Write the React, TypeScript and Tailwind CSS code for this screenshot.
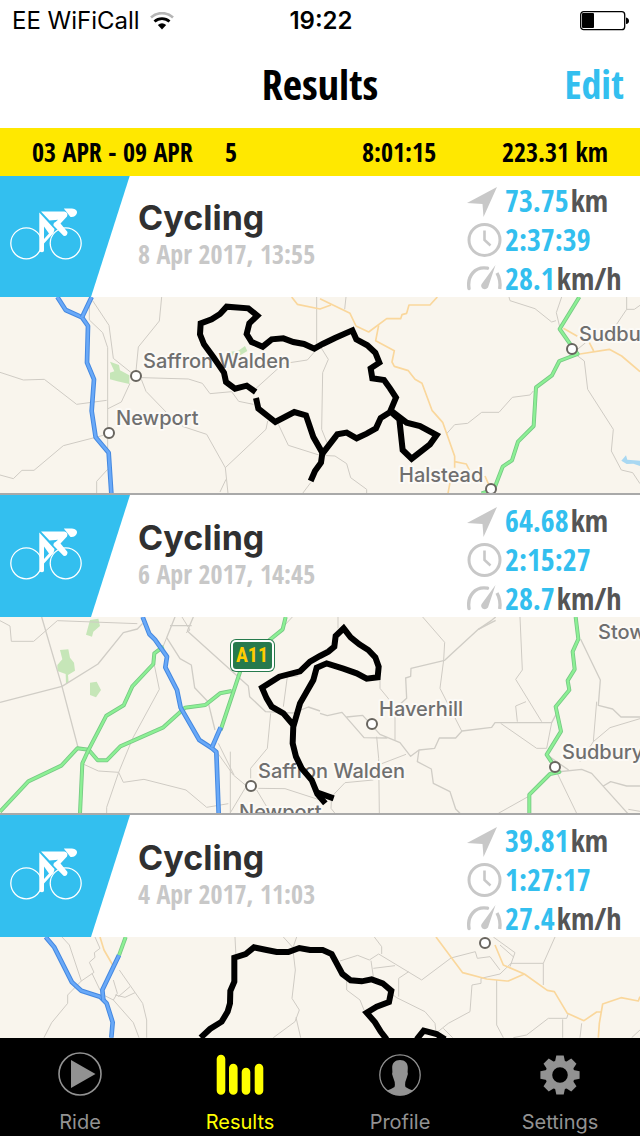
import React from "react";

type Point = { x: number; y: number };

interface Place extends Point {
  name?: string;
  label?: Point;
}

interface Road {
  kind: "minor" | "lane" | "local" | "primary" | "motorway";
  d: string;
}

interface RideMap {
  originY: number;
  parks: string[];
  water?: string[];
  roads: Road[];
  places: Place[];
  track: string[];
  shield?: { name: string; x: number; y: number };
}

interface Ride {
  id: number;
  sport: string;
  date: string;
  distance: string;
  duration: string;
  speed: string;
  map: RideMap;
}

const condensed = "font-['Open_Sans_Condensed','Roboto_Condensed',sans-serif] font-bold";

// Road geometry is stored at three units per pixel
const rides: Ride[] = [
  {
    id: 1,
    sport: "Cycling",
    date: "8 Apr 2017, 13:55",
    distance: "73.75",
    duration: "2:37:39",
    speed: "28.1",
    map: {
      originY: 3,
      parks: [
        "M330 197L357 207L360 223L388 238V264L352 256L330 250V230L343 226Z",
        "M686 168L715 164L735 150L742 165L722 177L708 176L690 182Z",
      ],
      water: ["M1864 494L1878 478L1882 491L1920 494V510L1900 503L1880 504Z"],
      roads: [
        { kind: "minor", d: "M0 229L70 252L133 250L230 325L320 313" },
        { kind: "minor", d: "M0 537L40 548L66 523H102L190 449L310 418" },
        { kind: "minor", d: "M268 10V72L308 110L323 155V470M323 520L290 556V592" },
        { kind: "minor", d: "M278 14L327 88L340 187L396 232" },
        { kind: "minor", d: "M485 3L478 75L415 153L408 225" },
        { kind: "minor", d: "M426 245L565 249L607 262L630 293L695 287L716 316L760 325" },
        { kind: "minor", d: "M424 250L438 286L500 350L550 392L620 415L676 515L684 592M390 262L364 318L324 338" },
        { kind: "minor", d: "M660 588L678 550M676 515L798 400L803 375M765 280L850 203L922 192L950 160V3" },
        { kind: "minor", d: "M835 385L865 448L960 478L1005 480L1040 503L1052 545L1100 580V592M932 560L908 592" },
        { kind: "minor", d: "M960 150L985 190L968 230L965 400L985 450" },
        { kind: "minor", d: "M1038 3L1034 40" },
        { kind: "minor", d: "M1527 3L1530 14L1605 38L1655 78L1668 74M1685 3L1669 50L1680 96" },
        { kind: "minor", d: "M1880 3V40L1849 86M1880 40H1903L1920 28" },
        { kind: "minor", d: "M1600 285L1590 297L1537 304L1497 349H1445L1403 382L1364 386L1340 413" },
        { kind: "minor", d: "M1757 140L1720 170L1753 195L1763 280L1840 400L1834 465L1864 522L1898 530L1920 563" },
        { kind: "local", d: "M875 3L892 25L960 39L993 27M960 8L1050 52L1068 90L1106 108L1160 68H1202L1206 56L1220 52L1227 27H1290L1312 3" },
        { kind: "local", d: "M1136 88L1127 134L1183 164L1176 198L1183 211L1225 224L1245 250L1266 262L1296 343L1328 379L1364 481V515M1364 497L1399 504L1408 522M1350 560L1344 592M1455 540L1470 575" },
        { kind: "local", d: "M1690 97L1732 121M1740 174L1828 160L1865 180L1920 227M1768 140L1781 165" },
        { kind: "primary", d: "M1738 3L1679 99L1716 152L1733 174L1678 195L1656 238L1608 274L1601 390L1554 437L1536 493L1508 512L1482 580L1445 592" },
        { kind: "motorway", d: "M172 3L197 42L246 64L264 90L261 200L282 250L275 345L287 424L326 470L334 592" },
        { kind: "motorway", d: "M275 3L246 64" },
      ],
      places: [
        { x: 136, y: 79, name: "Saffron Walden", label: { x: 143, y: 71 } },
        { x: 109, y: 136, name: "Newport", label: { x: 116, y: 128 } },
        { x: 572, y: 52, name: "Sudbury", label: { x: 579, y: 44 } },
        { x: 491, y: 192, name: "Halstead", label: { x: 399, y: 185 } },
      ],
      track: [
        "M767 288L740 269L705 278L678 258L672 230L640 183L612 145L600 115L602 82L635 70L660 54L680 32L745 37L772 59L748 82L740 114L755 138L788 152L815 130L850 127L880 138L912 144L943 158L968 144L1005 126L1057 103L1069 130L1102 148L1126 170L1138 200L1112 217L1117 247L1152 252L1170 277L1188 305L1172 343L1220 380L1260 390L1310 417L1290 445L1235 488L1208 462L1198 370L1172 347L1142 366L1128 397L1100 413L1070 427L1040 410L1012 415L968 472L940 423L918 358L883 348L826 378L775 338L768 306",
        "M968 465L963 500L945 525L932 555",
      ],
    },
  },
  {
    id: 2,
    sport: "Cycling",
    date: "6 Apr 2017, 14:45",
    distance: "64.68",
    duration: "2:15:27",
    speed: "28.7",
    map: {
      originY: 21,
      parks: [
        "M180 120L205 118L210 143L222 158L225 182L204 195L206 218L198 222L197 192L172 183L172 165L187 148Z",
        "M270 30L295 26L300 48L280 65L276 80L258 74Z",
        "M270 218L290 215L303 240L288 262L270 255Z",
      ],
      roads: [
        { kind: "minor", d: "M0 32L30 48L34 94H101L172 32L412 41" },
        { kind: "lane", d: "M0 277L186 229L294 162L370 68L412 57L428 40M125 21L186 229L234 412" },
        { kind: "lane", d: "M562 63L580 21M510 47H575M525 21L500 83L540 146L574 165L584 233L624 275L645 360M562 63L745 228L749 260L797 305L880 309L925 291L960 303" },
        { kind: "minor", d: "M462 160L478 238L398 385L356 487L320 592V610M245 460L295 483L356 487L370 517L432 508L558 540L620 592L685 581" },
        { kind: "minor", d: "M546 21L570 60L558 68M877 21L850 50M500 83L485 120M650 425L700 495L748 535M655 400L702 495M691 425V610" },
        { kind: "minor", d: "M752 505V475L802 415L812 310M850 290L862 200L895 198M775 535L855 536L960 570M770 540L800 590M735 535L690 610" },
        { kind: "minor", d: "M1014 21V55M1140 205V235L1185 290V390M1268 21L1334 97L1331 150L1320 235L1385 363" },
        { kind: "lane", d: "M1487 31L1435 58L1334 151L1233 175L1232 199L1217 204L1220 265L1190 292" },
        { kind: "lane", d: "M1487 21L1475 31L1435 58" },
        { kind: "lane", d: "M960 310L982 317L1026 307L1092 383L1162 384M1040 321L1088 316L1140 373L1200 398L1232 439L1257 420L1304 415L1318 384H1367L1386 363L1475 352L1485 338H1655L1670 310" },
        { kind: "lane", d: "M1257 420L1252 455L1294 477L1300 520L1350 545L1367 597L1380 610" },
        { kind: "minor", d: "M1130 380L1136 445L1138 610M1218 433L1140 463L1120 510L1035 518L995 560L993 595L1005 610" },
        { kind: "minor", d: "M1560 21L1567 180L1547 208L1625 335M1578 275L1547 288L1552 335M1502 340L1610 415H1640L1655 338" },
        { kind: "lane", d: "M1742 88L1801 210L1795 286L1838 297L1863 321H1920M1648 440L1706 480M1670 486L1745 478L1775 490L1883 610M1810 528L1832 515L1880 528H1920" },
        { kind: "minor", d: "M1790 275L1780 395L1830 353L1920 326M1780 395L1740 455M1670 486L1730 610M1588 558L1495 610M1885 598L1920 604" },
        { kind: "primary", d: "M0 605L85 514L184 467L232 415L266 419L293 451H320L361 409L490 352L555 293L616 285L660 250L695 243" },
        { kind: "primary", d: "M240 610L247 460L266 419L319 317L371 286L397 229L460 162L463 130L490 110" },
        { kind: "primary", d: "M857 21L848 58L790 105L722 180L662 360" },
        { kind: "primary", d: "M1727 21L1735 87L1718 125L1724 178L1703 212L1708 240L1667 290L1683 364L1640 434L1664 470L1678 486L1650 492L1588 554V610" },
        { kind: "motorway", d: "M428 21L448 72L465 89L501 140L496 172L531 240L542 293L598 390L635 414L649 426L656 610" },
        { kind: "motorway", d: "M662 352L636 412" },
      ],
      places: [
        { x: 251, y: 169, name: "Saffron Walden", label: { x: 258, y: 161 } },
        { x: 372, y: 107, name: "Haverhill", label: { x: 379, y: 99 } },
        { x: 555, y: 150, name: "Sudbury", label: { x: 562, y: 142 } },
        { x: 700, y: 12, name: "Stow", label: { x: 598, y: 22 } },
        { x: 230, y: 222, name: "Newport", label: { x: 239, y: 202 } },
      ],
      track: [
        "M976 580L952 552L935 510L905 475L888 440L878 400L880 345L850 310L815 290L800 265L786 233L838 200L900 184L930 155L960 138L985 125L1003 110L1007 78L1031 55L1052 82L1078 103L1105 120L1126 142L1136 170L1133 202L1100 206L1070 190L1030 176L980 160L950 173L940 210L900 280L880 350",
        "M950 547L1001 565",
      ],
      shield: { name: "A11", x: 230, y: 22 },
    },
  },
  {
    id: 3,
    sport: "Cycling",
    date: "4 Apr 2017, 11:03",
    distance: "39.81",
    duration: "1:27:17",
    speed: "27.4",
    map: {
      originY: 21,
      parks: [],
      roads: [
        { kind: "minor", d: "M186 21L208 45L244 153L282 127L268 97L285 82L283 68L300 55L285 21M244 153L203 195V220L155 278L132 323M276 130L300 180" },
        { kind: "minor", d: "M358 120L428 220L440 270V323M310 195L340 210L400 278L417 323M340 150L352 190L340 210M345 195L375 202L405 188M390 170L355 200" },
        { kind: "minor", d: "M705 21L708 80M850 21L878 52L886 120L876 205L898 240L885 275L820 323M888 262L902 323M890 21L880 50" },
        { kind: "minor", d: "M1020 93L1073 76L1108 90L1136 72L1265 150L1353 84L1426 65L1432 85L1470 80L1500 120M1113 92L1120 140M1120 115L1185 107M1123 21L1145 50V72" },
        { kind: "minor", d: "M1040 150V180L1080 210L1092 240M1160 180L1190 203L1275 245L1305 280L1308 305M1226 125L1196 145V200" },
        { kind: "minor", d: "M1314 305L1345 280L1410 245L1416 165L1443 160V145L1500 132L1533 100H1630V165M1630 100L1665 21M1480 21L1545 68L1530 110M1500 45L1542 82" },
        { kind: "minor", d: "M1490 150V285L1510 323M1540 323L1580 315L1645 265H1700L1705 250M1688 268V323M1745 280L1740 323M1330 295L1358 323M1895 323L1920 300" },
        { kind: "local", d: "M300 21L312 60L338 105M1308 21L1388 128L1460 147L1520 153L1525 153L1573 132M1485 45L1510 105L1573 132L1642 181L1663 185L1702 250L1752 272L1790 246H1804M1795 323L1798 280L1808 222L1863 203L1915 213L1920 200" },
        { kind: "primary", d: "M377 21L357 76" },
        { kind: "motorway", d: "M137 21L163 52L216 157L244 182L300 200L320 220L338 277L334 323" },
        { kind: "motorway", d: "M357 76L307 180L310 210" },
      ],
      places: [{ x: 485, y: 6 }],
      track: [
        "M602 323L630 297L665 275L683 245L690 220L691 183L703 155V83L737 72L762 52L800 60L830 66H865L898 54L930 60H968L995 72L1010 100L1027 132L1052 151L1085 154L1115 148L1148 160L1174 182L1167 216L1130 230L1100 248L1125 277L1142 305L1160 328",
        "M1250 328L1271 302L1310 312L1335 328",
      ],
    },
  },
];

const roadCasing = {
  minor: "stroke-[#cfcbc4]",
  lane: "stroke-[#d0cdc6]",
  local: "stroke-[#fad79c]",
  primary: "stroke-[#77c884]",
  motorway: "stroke-[#4488e0]",
};

const roadWidth = { minor: 3, lane: 4, local: 5, primary: 12, motorway: 14 };

const WifiIcon = () => (
  <svg viewBox="0 0 24 18" className="w-6 h-[18px]" fill="none" aria-hidden="true">
    <path d="M1 5.500A16 16 0 0 1 23 5.500" stroke="#b5b5b5" strokeWidth="2.600" />
    <path d="M4.500 9.500A11 11 0 0 1 19.500 9.500" stroke="#000" strokeWidth="2.800" />
    <path d="M7.800 13A6.500 6.500 0 0 1 16.200 13L12 17.500Z" fill="#000" />
  </svg>
);

const BatteryIcon = () => (
  <svg viewBox="0 0 50 20" className="w-[50px] h-5" aria-hidden="true">
    <rect x="0.700" y="0.700" width="44" height="18" rx="3" fill="none" stroke="#000" strokeWidth="1.300" />
    <rect x="2" y="2" width="12" height="15" rx="1" fill="#000" />
    <path d="M46 6.500Q49 7 49 10Q49 12.500 46 13Z" fill="#000" />
  </svg>
);

const CyclistIcon = () => (
  <svg viewBox="0 0 72 52" className="w-[72px] h-[52px]" fill="none" aria-hidden="true">
    <g stroke="#fff" strokeWidth="1.300">
      <circle cx="16.300" cy="35.300" r="15.500" />
      <circle cx="55.700" cy="35.300" r="15.500" />
    </g>
    <path
      fill="#fff"
      d="M29.300 4.500L43 19.500L44.500 21L43.500 25L34 35.500V42.500Q34 44.200 32 44.200Q29.300 44.200 29.300 42.500ZM34 18.500V31L39 25.500Z"
      fillRule="evenodd"
    />
    <path
      fill="#fff"
      d="M31 3.500H54.500Q58.500 4.500 57 8.500L50.500 15.500L57.500 24Q57.500 28.500 53.500 27.800L43.500 17.500Q43 15 45.500 14L48 11.800L39.500 12.500Z"
    />
    <path fill="#fff" d="M53.800 0.500H62Q67.500 1 67 5Q65.500 9.500 60.500 9Z" />
  </svg>
);

const DistanceIcon = () => (
  <svg viewBox="0 0 36 36" className="w-9 h-9" fill="#c8c8c8" aria-hidden="true">
    <path d="M30 4L16.500 34L15.500 21L0 20Z" />
  </svg>
);

const ClockIcon = () => (
  <svg viewBox="0 0 36 36" className="w-9 h-9" fill="none" stroke="#c8c8c8" aria-hidden="true">
    <circle cx="17.500" cy="18" r="15.500" strokeWidth="3" />
    <path d="M17.500 8.500V18L23.500 23.500" strokeWidth="2.600" />
  </svg>
);

const SpeedIcon = () => (
  <svg viewBox="0 0 36 36" className="w-9 h-9" aria-hidden="true">
    <g fill="none" stroke="#c8c8c8" strokeWidth="3.400">
      <path d="M2 27.500C0 15 8 5 20.500 7.200" strokeLinecap="round" />
      <path d="M30 12Q34 19 32.700 28" />
    </g>
    <path d="M28.500 4L21 26.500Q18.500 29.500 15.500 27.500Q13 25 15 22.500Z" fill="#c8c8c8" />
  </svg>
);

const PlayIcon = () => (
  <svg viewBox="0 0 44 44" className="w-11 h-11" aria-hidden="true">
    <circle cx="22" cy="22" r="21" fill="none" stroke="currentColor" strokeWidth="1.600" />
    <path d="M13 8V36L37.500 22Z" fill="currentColor" />
  </svg>
);

const BarsIcon = () => (
  <svg viewBox="0 0 48 44" className="w-12 h-11" stroke="currentColor" strokeWidth="8.600" strokeLinecap="round" aria-hidden="true">
    <path d="M5 7V38.500M17.300 16V38.500M30 20V38.500M43 16V38.500" />
  </svg>
);

const ProfileIcon = () => (
  <svg viewBox="0 0 44 44" className="w-11 h-11" aria-hidden="true">
    <circle cx="22" cy="23" r="20.200" fill="none" stroke="currentColor" strokeWidth="1.300" />
    <path
      fill="currentColor"
      d="M22 8C27 8 30 11 29.800 16L29.600 20Q30.500 21.500 29 25L27.300 30Q26.800 33 27.500 35Q31 37 34.800 38.500Q29.500 43.400 22 43.400T9.200 38.500Q13 37 16.500 35Q17.200 33 16.700 30L15 25Q13.500 21.500 14.400 20L14.200 16C14 11 17 8 22 8Z"
    />
  </svg>
);

const GearIcon = () => (
  <svg viewBox="0 0 44 44" className="w-11 h-11" aria-hidden="true">
    <circle cx="22" cy="23" r="11.300" fill="none" stroke="currentColor" strokeWidth="7" />
    {[0, 45, 90, 135, 180, 225, 270, 315].map((angle) => (
      <path key={angle} d="M16.500 12L18.300 3.400H25.700L27.500 12Z" fill="currentColor" transform={`rotate(${angle} 22 23)`} />
    ))}
  </svg>
);

const RouteMap: React.FC<{ map: RideMap; title: string }> = ({ map, title }) => (
  <svg viewBox="0 0 640 196" className="block w-full h-auto bg-[#f9f5ed]" role="img" aria-label={title}>
    <g transform={`scale(0.33333) translate(0 ${-map.originY})`} fill="none" strokeLinejoin="round">
      {map.parks.map((d) => (
        <path key={d} d={d} className="fill-[#c6e6b8]" />
      ))}
      {map.water?.map((d) => (
        <path key={d} d={d} className="fill-[#a9d8f2]" />
      ))}
      {map.roads.map((road) => (
        <g key={road.d}>
          <path d={road.d} className={roadCasing[road.kind]} strokeWidth={roadWidth[road.kind]} />
          {road.kind === "primary" && <path d={road.d} className="stroke-[#8cf094]" strokeWidth={7} />}
          {road.kind === "motorway" && <path d={road.d} className="stroke-[#69a9f8]" strokeWidth={8} />}
        </g>
      ))}
    </g>
    {map.places.map((place) => (
      <g key={`${place.x}-${place.y}`}>
        <circle cx={place.x} cy={place.y} r="5" fill="#fff" stroke="#68655f" strokeWidth="2" />
        {place.label && (
          <text
            x={place.label.x}
            y={place.label.y}
            className="font-['Inter',sans-serif] text-[20px] font-medium fill-[#6f6f6f] stroke-[#fcfaf6] [paint-order:stroke]"
            strokeWidth="4"
            strokeLinejoin="round"
          >
            {place.name}
          </text>
        )}
      </g>
    ))}
    {map.shield && (
      <g transform={`translate(${map.shield.x} ${map.shield.y})`}>
        <rect width="45" height="33" rx="6" fill="#277a4d" />
        <rect x="2" y="2" width="41" height="29" rx="4" fill="#277a4d" stroke="#fff" strokeWidth="2" />
        <text
          x="22"
          y="23"
          textAnchor="middle"
          className="font-['Roboto_Condensed',sans-serif] text-[20px] font-bold fill-[#fc0]"
        >
          {map.shield.name}
        </text>
      </g>
    )}
    <g transform={`scale(0.33333) translate(0 ${-map.originY})`} fill="none" stroke="#000" strokeWidth="18">
      {map.track.map((d) => (
        <path key={d} d={d} />
      ))}
    </g>
  </svg>
);

const RideCard: React.FC<{ ride: Ride }> = ({ ride }) => (
  <article className="bg-white border-b-2 border-[#a9a9a9]">
    <div className="flex h-[122px]">
      <div className="w-[130px] shrink-0 bg-[#33bfef] flex items-center pl-[10px] [clip-path:polygon(0_0,100%_0,70%_100%,0_100%)]">
        <div className="pb-1">
          <CyclistIcon />
        </div>
      </div>
      <div className="flex-1 min-w-0 pl-2 pt-[23px]">
        <h2 className="font-['Inter',sans-serif] text-[34px] leading-10 font-bold text-[#303030]">{ride.sport}</h2>
        <p className={`${condensed} text-[26px] leading-8 text-[#c8c8c8] whitespace-nowrap`}>{ride.date}</p>
      </div>
      <ul className={`${condensed} w-[173px] shrink-0 pt-[6px] text-[30px] leading-[39px] text-[#33bfef] whitespace-nowrap`}>
        <li className="flex items-center gap-[2px]">
          <DistanceIcon />
          <span>{ride.distance}</span>
          <span className="text-[#555]">km</span>
        </li>
        <li className="flex items-center gap-[2px]">
          <ClockIcon />
          <span>{ride.duration}</span>
        </li>
        <li className="flex items-center gap-[2px]">
          <SpeedIcon />
          <span>{ride.speed}</span>
          <span className="text-[#555]">km/h</span>
        </li>
      </ul>
    </div>
    <RouteMap map={ride.map} title={`Route of ${ride.date}`} />
  </article>
);

const tabs = [
  { id: "ride", label: "Ride", icon: PlayIcon },
  { id: "results", label: "Results", icon: BarsIcon },
  { id: "profile", label: "Profile", icon: ProfileIcon },
  { id: "settings", label: "Settings", icon: GearIcon },
];

export default function App() {
  const [activeTab, setActiveTab] = React.useState("results");

  return (
    <div className="h-screen flex flex-col bg-white text-black overflow-hidden">
      <div className="h-10 shrink-0 grid grid-cols-3 items-center pt-px pl-3 pr-[10px] font-['Inter',sans-serif] text-[24px] leading-8">
        <div className="flex items-center gap-[10px] whitespace-nowrap">
          <span>EE WiFiCall</span>
          <WifiIcon />
        </div>
        <span className="text-center font-semibold">19:22</span>
        <div className="flex justify-end">
          <BatteryIcon />
        </div>
      </div>

      <header className={`${condensed} h-[88px] shrink-0 grid grid-cols-[1fr_auto_1fr] items-center px-4`}>
        <h1 className="col-start-2 text-[42px] leading-[48px]">Results</h1>
        <button type="button" className="justify-self-end text-[40px] leading-[48px] text-[#33bfef]">
          Edit
        </button>
      </header>

      <div
        className={`${condensed} relative z-10 h-12 shrink-0 grid grid-cols-[193fr_137fr_140fr_106fr] items-center px-8 bg-[#ffe800] text-[26px] leading-8 whitespace-nowrap`}
      >
        <span>03 APR - 09 APR</span>
        <span>5</span>
        <span>8:01:15</span>
        <span className="justify-self-end">223.31 km</span>
      </div>

      <main className="flex-1 min-h-0 -mt-px overflow-y-auto [scrollbar-width:none]">
        {rides.map((ride) => (
          <RideCard key={ride.id} ride={ride} />
        ))}
      </main>

      <nav className="h-[98px] shrink-0 grid grid-cols-4 bg-black font-['Inter',sans-serif] text-[20px] leading-6">
        {tabs.map((tab) => (
          <button
            key={tab.id}
            type="button"
            onClick={() => setActiveTab(tab.id)}
            className={`flex flex-col items-center justify-between pt-[14px] pb-[2px] ${
              activeTab === tab.id ? "text-[#ff0]" : "text-[#929292]"
            }`}
          >
            <tab.icon />
            {tab.label}
          </button>
        ))}
      </nav>
    </div>
  );
}
